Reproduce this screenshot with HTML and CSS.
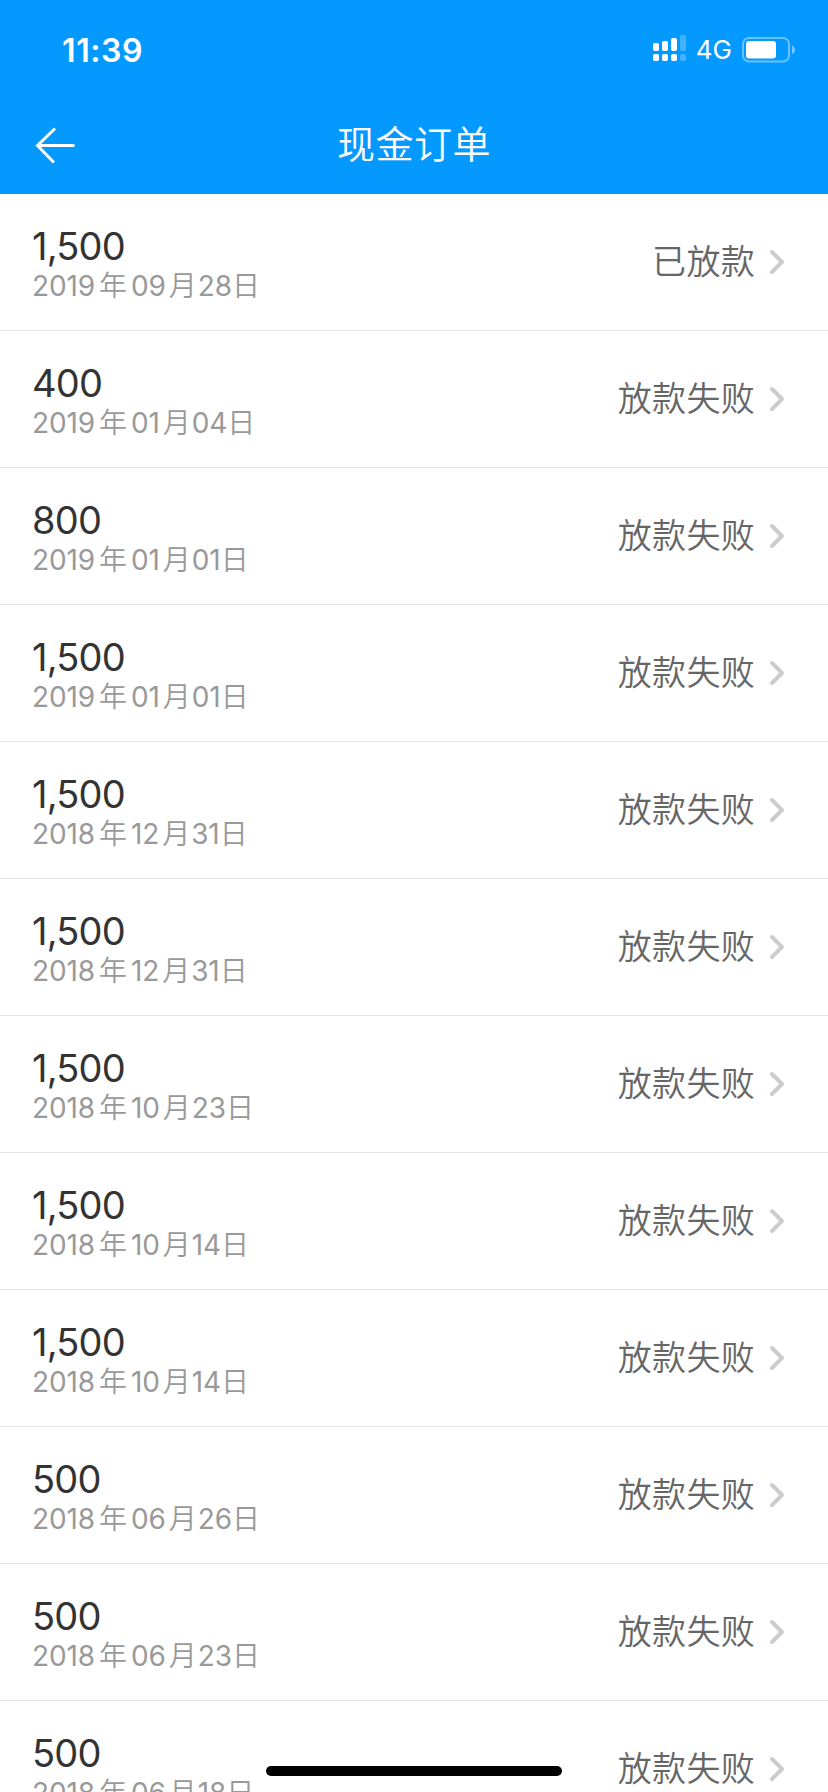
FILE: index.html
```html
<!DOCTYPE html>
<html lang="zh-CN">
<head>
<meta charset="utf-8">
<title>现金订单</title>
<link rel="stylesheet" href="styles.css">
</head>
<body>
<header class="header">
  <div class="status-bar">
    <span class="clock">11:39</span>
    <div class="indicators">
      <svg class="signal" width="34" height="26" viewBox="0 0 34 26" fill="#fff">
        <rect x="0" y="8" width="6" height="8" rx="1.8"/><rect x="9" y="6" width="6" height="10" rx="1.8"/><rect x="18" y="3" width="6" height="13" rx="1.8"/><rect x="27" y="0" width="6" height="16" rx="1.8" opacity=".25"/>
        <rect x="0" y="19" width="6" height="7" rx="1.8"/><rect x="9" y="19" width="6" height="7" rx="1.8"/><rect x="18" y="19" width="6" height="7" rx="1.8"/><rect x="27" y="19" width="6" height="7" rx="1.8" opacity=".25"/>
      </svg>
      <span class="network">4G</span>
      <svg class="battery" width="54" height="26" viewBox="0 0 54 26" fill="none">
        <rect x="1" y="1" width="46" height="23.5" rx="6" stroke="#fff" stroke-opacity=".4" stroke-width="2"/>
        <rect x="4" y="4" width="30" height="17.5" rx="3" fill="#fff"/>
        <path d="M50 8.5c4 1.500 4 7 0 8.500z" fill="#fff" fill-opacity=".45"/>
      </svg>
    </div>
  </div>
  <nav class="nav">
    <svg class="back" width="40" height="38" viewBox="0 0 40 38" fill="none" stroke="#fff" stroke-width="3"><path d="M20 1.500L2.500 18.500L19 35.500M2.500 18.500H39.500"/></svg>
    <h1 class="title">现金订单</h1>
  </nav>
</header>
<main class="list" id="list"></main>
<div class="home-bar"></div>
<script src="orders.js"></script>
</body>
</html>
```
FILE: styles.css
```css
* { box-sizing: border-box; }
body { margin: 0; height: 1792px; overflow: hidden; background: #fff; font-family: Inter, "Noto Sans CJK SC", sans-serif; }
.header { height: 194px; background: #0499ff; color: #fff; }
.status-bar { height: 98px; padding: 0 32px 0 62px; display: flex; align-items: center; justify-content: space-between; }
.clock { padding-top: 3px; font-size: 32px; font-weight: 600; line-height: 40px; letter-spacing: 0.6px; }
.indicators { display: flex; align-items: center; padding-top: 1px; }
.signal { margin-top: -3px; }
.network { font-size: 26px; line-height: 32px; margin: 1px 10px 0 9px; }
.nav { height: 96px; padding: 0 35px; display: grid; grid-template-columns: 40px 1fr 40px; align-items: center; }
.title { margin: 0; padding-bottom: 8px; font-family: "Noto Sans CJK SC", sans-serif; font-weight: 350; font-size: 38px; line-height: 48px; letter-spacing: 0.5px; text-align: center; }
.row { height: 137px; padding: 0 43px 0 32px; border-bottom: 1px solid #e3e3e3; display: flex; align-items: center; justify-content: space-between; }
.info { padding-top: 6px; }
.amount { font-size: 38px; line-height: 41px; color: #333; letter-spacing: -0.8px; }
.date { display: flex; padding-top: 1px; font-size: 28px; line-height: 36px; letter-spacing: -0.1px; color: #999; }
.unit { font-family: "Noto Sans CJK SC", sans-serif; font-weight: 350; font-size: 28px; line-height: 33px; }
.year { margin: 0 4px; }
.month { margin: 0 1px 0 3px; }
.day { margin-left: 0; }
.state { display: flex; align-items: center; gap: 14px; }
.label { padding-bottom: 4px; font-family: "Noto Sans CJK SC", sans-serif; font-weight: 350; font-size: 34px; line-height: 44px; letter-spacing: 0.3px; color: #666; }
.home-bar { position: fixed; left: 266px; bottom: 16px; width: 296px; height: 10px; border-radius: 5px; background: #000; }
```
FILE: orders.js
```js
const orders = [
  ["1,500", "2019", "09", "28", "已放款"],
  ["400", "2019", "01", "04", "放款失败"],
  ["800", "2019", "01", "01", "放款失败"],
  ["1,500", "2019", "01", "01", "放款失败"],
  ["1,500", "2018", "12", "31", "放款失败"],
  ["1,500", "2018", "12", "31", "放款失败"],
  ["1,500", "2018", "10", "23", "放款失败"],
  ["1,500", "2018", "10", "14", "放款失败"],
  ["1,500", "2018", "10", "14", "放款失败"],
  ["500", "2018", "06", "26", "放款失败"],
  ["500", "2018", "06", "23", "放款失败"],
  ["500", "2018", "06", "18", "放款失败"]
];
document.getElementById("list").innerHTML = orders.map(([amount, y, m, d, state]) => `
  <article class="row">
    <div class="info">
      <div class="amount">${amount}</div>
      <div class="date">${y}<span class="unit year">年</span>${m}<span class="unit month">月</span>${d}<span class="unit day">日</span></div>
    </div>
    <div class="state">
      <span class="label">${state}</span>
      <svg width="16" height="26" viewBox="0 0 16 26" fill="none" stroke="#ccc" stroke-width="4" stroke-linecap="round" stroke-linejoin="round"><path d="M3 3L13 13L3 23"/></svg>
    </div>
  </article>`).join("");
```
